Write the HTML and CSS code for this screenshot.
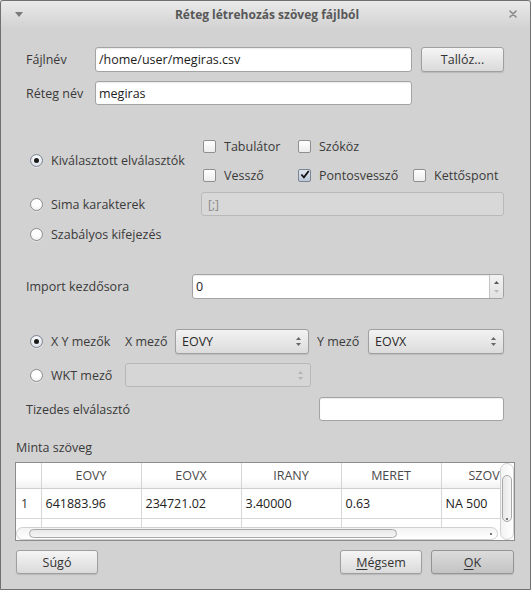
FILE: index.html
```html
<!DOCTYPE html>
<html lang="hu">
<head>
<meta charset="utf-8">
<title>Réteg létrehozás szöveg fájlból</title>
<link rel="stylesheet" href="styles.css">
</head>
<body>
<div class="window">
  <div class="titlebar">
    <svg class="tb-menu" width="8" height="5" viewBox="0 0 8 5"><polygon points="0,0 8,0 4,5" fill="#7a7a7a"/></svg>
    <span class="tb-title">Réteg létrehozás szöveg fájlból</span>
    <svg class="tb-close" width="8" height="8" viewBox="0 0 8 8"><path d="M1 1 L7 7 M7 1 L1 7" stroke="#8a8a8a" stroke-width="1.6" stroke-linecap="round"/></svg>
  </div>
  <div class="content">
    <div class="form">
      <div class="row r1">
        <span class="lbl w-lbl1">Fájlnév</span>
        <div class="field w-file">/home/user/megiras.csv</div>
        <div class="btn w-browse">Tallóz...</div>
      </div>
      <div class="row r2">
        <span class="lbl w-lbl1">Réteg név</span>
        <div class="field w-file">megiras</div>
      </div>

      <div class="sep">
        <div class="sep-left">
          <span class="radio checked"></span><span class="rtext">Kiválasztott elválasztók</span>
        </div>
        <div class="checks">
          <div class="chk"><span class="box"></span>Tabulátor</div>
          <div class="chk"><span class="box"></span>Szóköz</div>
          <div class="chk"></div>
          <div class="chk"><span class="box"></span>Vessző</div>
          <div class="chk"><span class="box checked"><svg width="11" height="11" viewBox="0 0 11 11"><path d="M1.5 5.5 L4.3 8.6 L9.6 1.6" fill="none" stroke="#111" stroke-width="1.9"/></svg></span>Pontosvessző</div>
          <div class="chk"><span class="box"></span>Kettőspont</div>
        </div>
      </div>
      <div class="row r-sima">
        <div class="sep-left"><span class="radio"></span><span class="rtext">Sima karakterek</span></div>
        <div class="field disabled w-sima">[;]</div>
      </div>
      <div class="row r-szab">
        <div class="sep-left"><span class="radio"></span><span class="rtext">Szabályos kifejezés</span></div>
      </div>

      <div class="row r-import">
        <span class="lbl w-lbl2">Import kezdősora</span>
        <div class="field spin w-spin">
          <span class="spin-val">0</span>
          <span class="spin-btns">
            <svg width="5" height="3" viewBox="0 0 5 3"><polygon points="0,3 2.5,0 5,3" fill="#555"/></svg>
            <svg width="5" height="3" viewBox="0 0 5 3"><polygon points="0,0 5,0 2.5,3" fill="#bbb"/></svg>
          </span>
        </div>
      </div>

      <div class="row r-xy">
        <div class="ritem w-xy"><span class="radio checked"></span><span class="rtext">X Y mezők</span></div>
        <span class="lbl w-xl">X mező</span>
        <div class="combo w-cx"><span>EOVY</span>
          <span class="arrows"><svg width="5" height="3" viewBox="0 0 5 3"><polygon points="0,3 2.5,0 5,3" fill="#666"/></svg><svg width="5" height="3" viewBox="0 0 5 3"><polygon points="0,0 5,0 2.5,3" fill="#666"/></svg></span>
        </div>
        <span class="lbl w-yl">Y mező</span>
        <div class="combo w-cy"><span>EOVX</span>
          <span class="arrows"><svg width="5" height="3" viewBox="0 0 5 3"><polygon points="0,3 2.5,0 5,3" fill="#666"/></svg><svg width="5" height="3" viewBox="0 0 5 3"><polygon points="0,0 5,0 2.5,3" fill="#666"/></svg></span>
        </div>
      </div>
      <div class="row r-wkt">
        <div class="ritem w-wkt"><span class="radio"></span><span class="rtext">WKT mező</span></div>
        <div class="combo disabled w-cw"><span></span>
          <span class="arrows"><svg width="5" height="3" viewBox="0 0 5 3"><polygon points="0,3 2.5,0 5,3" fill="#b4b4b4"/></svg><svg width="5" height="3" viewBox="0 0 5 3"><polygon points="0,0 5,0 2.5,3" fill="#b4b4b4"/></svg></span>
        </div>
      </div>
      <div class="row r-dec">
        <span class="lbl w-lbl3">Tizedes elválasztó</span>
        <div class="field w-dec"></div>
      </div>
    </div>

    <div class="sample-lbl">Minta szöveg</div>
    <div class="tframe">
      <div class="tview">
        <table class="grid">
          <colgroup><col class="c0"><col class="c1"><col class="c1"><col class="c1"><col class="c1"><col class="c1"></colgroup>
          <thead>
            <tr><th></th><th>EOVY</th><th>EOVX</th><th>IRANY</th><th>MERET</th><th class="last">SZOV</th></tr>
          </thead>
          <tbody>
            <tr><td class="rn">1</td><td>641883.96</td><td>234721.02</td><td>3.40000</td><td>0.63</td><td>NA 500</td></tr>
            <tr><td class="rn"></td><td></td><td></td><td></td><td></td><td></td></tr>
          </tbody>
        </table>
      </div>
      <div class="vscroll"><div class="vthumb"></div><span class="vdot"></span></div>
      <div class="hscroll"><div class="hthumb"></div><span class="hdot"></span></div>
    </div>

    <div class="buttons">
      <div class="btn w-help">Súgó</div>
      <div class="spacer"></div>
      <div class="btn w-cancel"><u>M</u>égsem</div>
      <div class="btn default w-ok"><u>O</u>K</div>
    </div>
  </div>
</div>
</body>
</html>
```

FILE: styles.css
```css
* { box-sizing: border-box; }
html, body { margin: 0; padding: 0; }
body {
  width: 531px;
  height: 590px;
  overflow: hidden;
  font-family: "Open Sans", "DejaVu Sans", sans-serif;
  font-size: 12.5px;
  color: #3a3a3a;
  background: #d2d2d2;
}
.window {
  width: 531px;
  height: 590px;
  border: 1px solid #707070;
  border-radius: 3px 3px 0 0;
  background: #d2d2d2;
  display: flex;
  flex-direction: column;
}
.titlebar {
  height: 26px;
  flex: none;
  display: flex;
  align-items: center;
  padding: 0 13px 0 14px;
  background: linear-gradient(#eaeaea, #d3d3d3);
  border-radius: 3px 3px 0 0;
}
.tb-menu { flex: none; margin-top: 1px; }
.tb-title {
  flex: 1;
  text-align: center;
  font-weight: bold;
  font-size: 12px;
  color: #585858;
  margin-left: 2px;
}
.tb-close { flex: none; }

.content {
  flex: 1;
  display: flex;
  flex-direction: column;
  padding: 0 15px 0 14px;
}
.form {
  display: flex;
  flex-direction: column;
  padding: 0 11px;
}
.row { display: flex; align-items: center; }
.lbl { flex: none; white-space: nowrap; }

.field {
  flex: none;
  height: 24px;
  background: #fff;
  border: 1px solid #a3a3a3;
  border-radius: 3px;
  box-shadow: inset 0 1px 1px rgba(0,0,0,0.08);
  padding-left: 3px;
  display: flex;
  align-items: center;
  color: #1c1c1c;
}
.field.disabled {
  background: #d8d8d8;
  border-color: #b9b9b9;
  box-shadow: none;
  color: #8a8a8a;
  padding-left: 6px;
  font-size: 12px;
}
.btn {
  flex: none;
  height: 24px;
  border: 1px solid #9f9f9f;
  border-radius: 3px;
  background: linear-gradient(#f5f5f5, #dadada);
  box-shadow: 0 1px 1px rgba(0,0,0,0.12);
  display: flex;
  align-items: center;
  justify-content: center;
  color: #333;
}
.btn.default {
  background: linear-gradient(#dcdcdc, #c3c3c3);
  border-color: #949494;
}
.btn u { text-decoration-thickness: 1px; text-underline-offset: 2px; }

.r1 { margin-top: 20px; height: 25px; }
.r1 .field, .r1 .btn { height: 25px; }
.r2 { margin-top: 9px; height: 24px; }
.w-lbl1 { width: 69px; }
.w-file { width: 317px; }
.w-browse { width: 83px; margin-left: 9px; }

.sep {
  margin-top: 29px;
  display: flex;
  align-items: center;
}
.sep-left {
  flex: none;
  width: 175px;
  display: flex;
  align-items: center;
}
.radio {
  flex: none;
  width: 13px;
  height: 13px;
  margin-left: 4px;
  border-radius: 50%;
  border: 1px solid #8c8c8c;
  background: radial-gradient(circle at 50% 35%, #ffffff 40%, #e6e6e6);
  position: relative;
  box-shadow: 0 1px 0 rgba(255,255,255,0.4);
}
.radio.checked {
  background: radial-gradient(circle at 50% 35%, #f3f5f8 30%, #ccd3de);
  border-color: #7d8590;
}
.radio.checked::after {
  content: "";
  position: absolute;
  left: 3px;
  top: 3px;
  width: 5px;
  height: 5px;
  border-radius: 50%;
  background: #1a1a1a;
}
.rtext { margin-left: 8px; white-space: nowrap; }

.checks {
  display: grid;
  grid-template-columns: 95px 115px auto;
  grid-auto-rows: 24px;
  row-gap: 5px;
  padding-left: 2px;
}
.chk { display: flex; align-items: center; white-space: nowrap; }
.box {
  flex: none;
  width: 13px;
  height: 13px;
  margin-right: 8px;
  border: 1px solid #8f8f8f;
  border-radius: 2px;
  background: linear-gradient(#ffffff, #ededed);
  display: flex;
  align-items: center;
  justify-content: center;
}
.box.checked {
  background: linear-gradient(#e0e6ef, #bcc8d8);
  border-color: #7b8593;
}
.box svg { margin-top: -1px; margin-left: 1px; }

.r-sima { margin-top: 5px; height: 24px; }
.w-sima { width: 303px; }
.r-szab { margin-top: 6px; height: 24px; }

.r-import { margin-top: 28px; height: 25px; }
.w-lbl2 { width: 166px; }
.w-spin { width: 312px; height: 25px; padding-left: 3px; padding-right: 0; }
.spin-val { flex: 1; }
.spin-btns {
  width: 14px;
  height: 100%;
  border-left: 1px solid #c4c4c4;
  background: linear-gradient(#f2f2f2, #e2e2e2);
  border-radius: 0 2px 2px 0;
  display: flex;
  flex-direction: column;
  align-items: center;
  justify-content: center;
  gap: 6px;
}

.r-xy { margin-top: 30px; height: 25px; }
.ritem { flex: none; display: flex; align-items: center; }
.w-xy { width: 99px; }
.w-xl { width: 50px; }
.combo {
  flex: none;
  height: 25px;
  border: 1px solid #a0a0a0;
  border-radius: 3px;
  background: linear-gradient(#f2f2f2, #dcdcdc);
  box-shadow: 0 1px 1px rgba(0,0,0,0.1);
  display: flex;
  align-items: center;
  justify-content: space-between;
  padding: 0 7px 0 6px;
  color: #2a2a2a;
}
.arrows { display: flex; flex-direction: column; gap: 3px; }
.combo.disabled {
  background: #d6d6d6;
  border-color: #b8b8b8;
  box-shadow: none;
  height: 24px;
}
.w-cx { width: 134px; }
.w-yl { width: 51px; margin-left: 8px; }
.w-cy { width: 136px; }

.r-wkt { margin-top: 9px; height: 24px; }
.w-wkt { width: 99px; }
.w-cw { width: 186px; }

.r-dec { margin-top: 10px; height: 24px; }
.w-lbl3 { width: 293px; }
.w-dec { width: 185px; }

.sample-lbl {
  margin-top: 18px;
  line-height: 17px;
  padding-left: 1px;
}
.tframe {
  margin-top: 6px;
  height: 79px;
  border: 1px solid #8c8c8c;
  background: #fff;
  display: grid;
  grid-template-columns: 1fr 14px;
  grid-template-rows: 1fr 13px;
  overflow: hidden;
}
.tview {
  grid-column: 1;
  grid-row: 1;
  overflow: hidden;
}
.grid {
  border-collapse: collapse;
  table-layout: fixed;
  width: 525px;
}
.c0 { width: 25px; }
.c1 { width: 100px; }
.grid th {
  height: 25px;
  font-weight: normal;
  color: #4a4a4a;
  text-align: center;
  background: linear-gradient(#ffffff 60%, #f1f1f1);
  border-right: 1px solid #d6d6d6;
  border-bottom: 1px solid #cfcfcf;
  padding: 0;
  white-space: nowrap;
  overflow: hidden;
}
.grid th.last { text-align: left; padding-left: 27px; }
.grid td {
  height: 30px;
  color: #222;
  padding: 0 0 0 4px;
  border-right: 1px solid #d6d6d6;
  border-bottom: 1px solid #d6d6d6;
  white-space: nowrap;
  overflow: hidden;
}
.grid td.rn { padding-left: 5px; color: #333; }

.vscroll {
  grid-column: 2;
  grid-row: 1 / span 2;
  border: 1px solid #d0d0d0;
  border-radius: 7px;
  background: linear-gradient(90deg, #f3f3f3, #ffffff);
  position: relative;
}
.vthumb {
  position: absolute;
  left: 1px;
  right: 1px;
  top: 11px;
  height: 47px;
  border: 1px solid #a8a8a8;
  border-radius: 5px;
  background: linear-gradient(90deg, #e8e8e8, #f6f6f6);
}
.vdot {
  position: absolute;
  left: 5px;
  top: 54px;
  width: 2px;
  height: 2px;
  background: #777;
}
.hscroll {
  grid-column: 1;
  grid-row: 2;
  margin-right: 2px;
  border: 1px solid #d0d0d0;
  border-radius: 7px;
  background: linear-gradient(#f3f3f3, #ffffff);
  position: relative;
}
.hthumb {
  position: absolute;
  top: 1px;
  bottom: 1px;
  left: 12px;
  width: 368px;
  border: 1px solid #a8a8a8;
  border-radius: 5px;
  background: linear-gradient(#e8e8e8, #f6f6f6);
}
.hdot {
  position: absolute;
  right: 5px;
  top: 5px;
  width: 2px;
  height: 2px;
  background: #777;
}

.buttons {
  margin-top: 9px;
  display: flex;
  height: 24px;
  padding: 0 1px 0 1px;
}
.spacer { flex: 1; }
.w-help { width: 82px; }
.w-cancel { width: 82px; }
.w-ok { width: 83px; margin-left: 9px; }
```
